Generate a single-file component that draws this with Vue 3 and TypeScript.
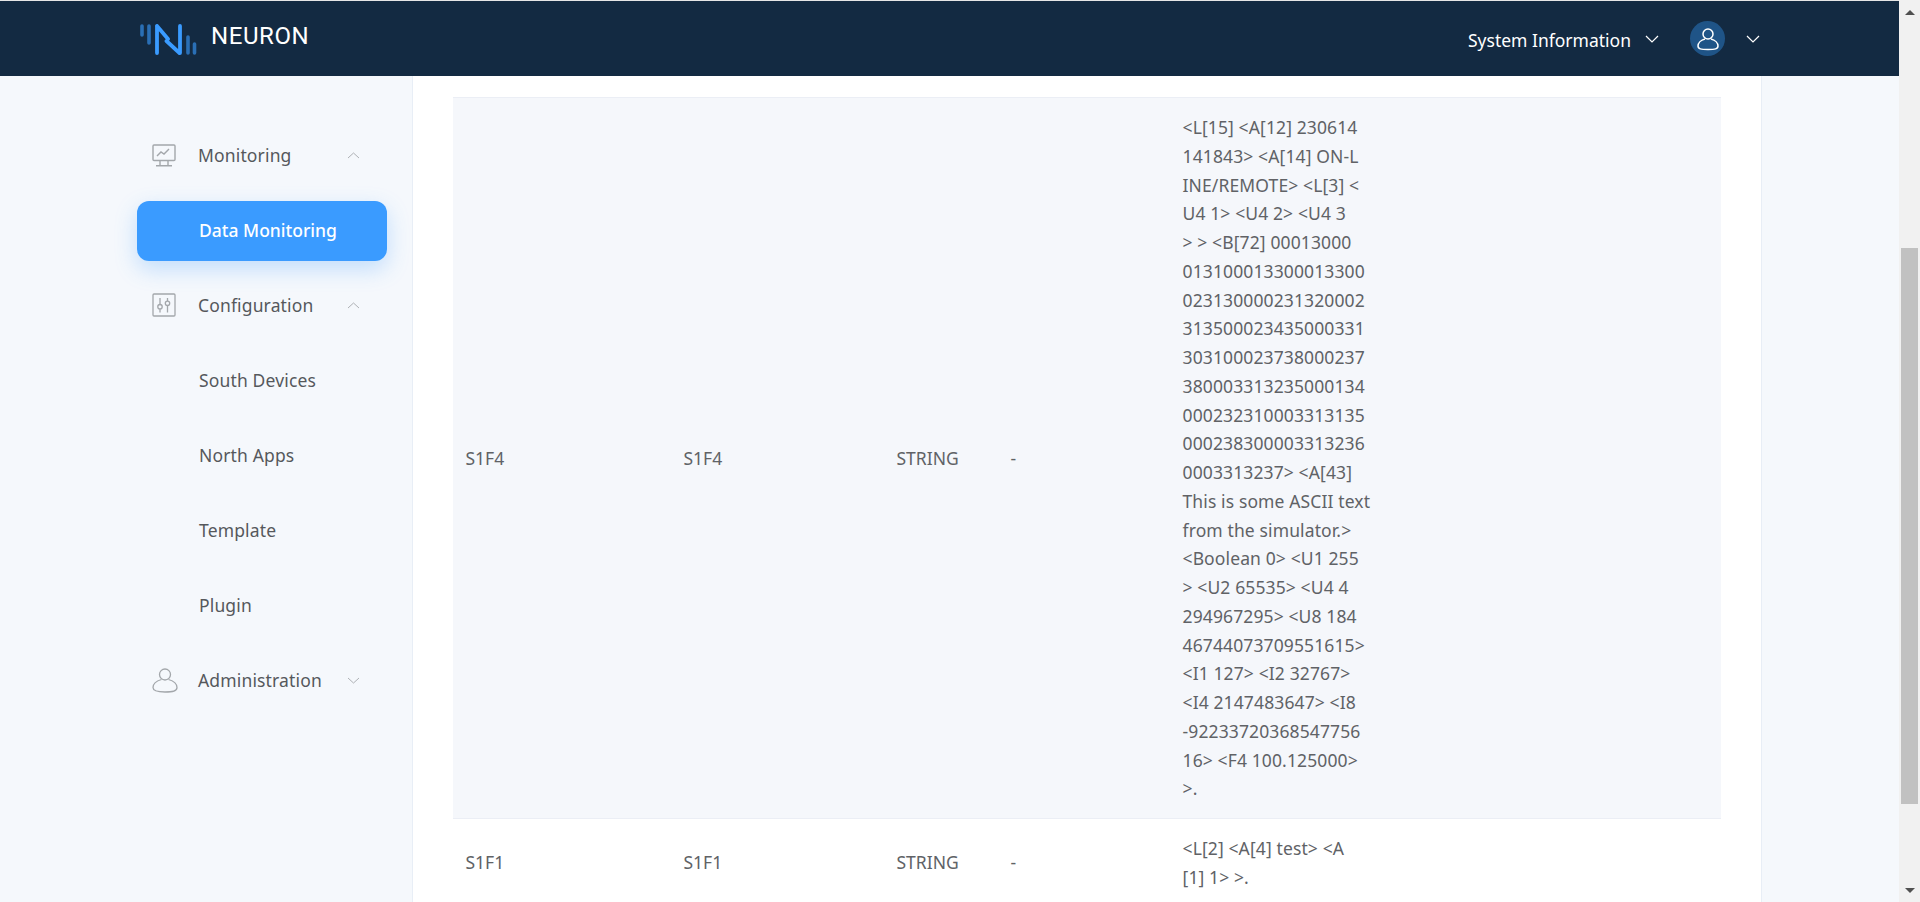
<script setup lang="ts">
interface MenuItem {
  label: string
  icon?: 'monitor' | 'sliders' | 'user'
  chevron?: 'up' | 'down'
  active?: boolean
}

interface TagRow {
  name: string
  address: string
  type: string
  desc: string
  value: string[]
}

const menu: MenuItem[] = [
  { label: 'Monitoring', icon: 'monitor', chevron: 'up' },
  { label: 'Data Monitoring', active: true },
  { label: 'Configuration', icon: 'sliders', chevron: 'up' },
  { label: 'South Devices' },
  { label: 'North Apps' },
  { label: 'Template' },
  { label: 'Plugin' },
  { label: 'Administration', icon: 'user', chevron: 'down' },
]

const rows: TagRow[] = [
  {
    name: 'S1F4',
    address: 'S1F4',
    type: 'STRING',
    desc: '-',
    value: [
      '<L[15] <A[12] 230614',
      '141843> <A[14] ON-L',
      'INE/REMOTE> <L[3] <',
      'U4 1> <U4 2> <U4 3',
      '> > <B[72] 00013000',
      '013100013300013300',
      '023130000231320002',
      '313500023435000331',
      '303100023738000237',
      '380003313235000134',
      '000232310003313135',
      '000238300003313236',
      '0003313237> <A[43]',
      'This is some ASCII text',
      'from the simulator.>',
      '<Boolean 0> <U1 255',
      '> <U2 65535> <U4 4',
      '294967295> <U8 184',
      '46744073709551615>',
      '<I1 127> <I2 32767>',
      '<I4 2147483647> <I8',
      '-92233720368547756',
      '16> <F4 100.125000>',
      '>.',
    ],
  },
  {
    name: 'S1F1',
    address: 'S1F1',
    type: 'STRING',
    desc: '-',
    value: ['<L[2] <A[4] test> <A', '[1] 1> >.'],
  },
]
</script>

<template>
  <div class="screen">
    <div class="page">
      <header class="topbar">
        <div class="brand">
          <svg class="logo" width="60" height="32" viewBox="0 0 60 32" fill="none" stroke-linecap="round">
            <path d="M5 3v9M12 3v17" stroke="#2a6fb5" stroke-width="3.600" />
            <path d="M51 14v16M57.500 21v9" stroke="#2a6fb5" stroke-width="3.600" />
            <path d="M20 3v27M20 3l11 13M29.500 18l13 12M43 3v27" stroke="#3a9bff" stroke-width="3.800" />
          </svg>
          <span class="brand-name">NEURON</span>
        </div>
        <div class="topbar-right">
          <span class="sys-info">System Information</span>
          <svg class="top-chev" width="14" height="8" viewBox="0 0 14 8" fill="none">
            <path d="M1 1l6 6 6-6" stroke="#fff" stroke-width="1.200" />
          </svg>
          <span class="avatar">
            <svg width="22" height="24" viewBox="0 0 22 24" fill="none" stroke="#fff" stroke-width="1.500">
              <circle cx="11" cy="7" r="5" />
              <path d="M8 12C4 13 1 16 1 19c0 3 3 3.500 10 3.500S21 22 21 19c0-3-3-6-7-7" />
            </svg>
          </span>
          <svg class="user-chev" width="14" height="8" viewBox="0 0 14 8" fill="none">
            <path d="M1 1l6 6 6-6" stroke="#fff" stroke-width="1.200" />
          </svg>
        </div>
      </header>

      <div class="body">
        <aside class="sidebar">
          <nav class="menu">
            <a v-for="item in menu" :key="item.label" class="menu-item" :class="{ active: item.active, parent: item.icon }">
              <span v-if="item.icon" class="menu-icon">
                <svg v-if="item.icon === 'monitor'" width="24" height="23" viewBox="0 0 24 23" fill="none" stroke="#a3a7ab" stroke-width="1.400">
                  <rect x="1" y="1" width="22" height="15.500" rx="1" />
                  <path d="M5 12l4-4 3 2 5-5M8 16.500v4.500M16 16.500v4.500M4 21.700h16" />
                </svg>
                <svg v-else-if="item.icon === 'sliders'" width="24" height="24" viewBox="0 0 24 24" fill="none" stroke="#a3a7ab" stroke-width="1.300">
                  <rect x="1" y="1" width="22" height="22" rx="1" />
                  <path d="M8 5v6.500M8 16v3.500M15.500 5v3M15.500 12.500V19.500" />
                  <circle cx="8" cy="13.700" r="2.200" />
                  <circle cx="15.500" cy="10.300" r="2.200" />
                </svg>
                <svg v-else width="26" height="25" viewBox="0 0 26 25" fill="none" stroke="#a3a7ab" stroke-width="1.300">
                  <circle cx="13" cy="6.500" r="5.500" />
                  <path d="M9.500 11.500C4.500 13 1 16 1 19.500 1 23 5 24 13 24s12-1 12-4.500c0-3.500-3.500-6.500-8.500-8" />
                </svg>
              </span>
              <span class="menu-label">{{ item.label }}</span>
              <svg v-if="item.chevron" class="menu-chev" width="13" height="7" viewBox="0 0 13 7" fill="none">
                <path :d="item.chevron === 'up' ? 'M1 6l5.500-5L12 6' : 'M1 1l5.500 5L12 1'" stroke="#aeb1b5" stroke-width="1" />
              </svg>
            </a>
          </nav>
        </aside>

        <main class="content">
          <table class="tag-table">
            <colgroup>
              <col class="col-name" />
              <col class="col-address" />
              <col class="col-type" />
              <col class="col-desc" />
              <col />
            </colgroup>
            <tbody>
              <tr v-for="(row, index) in rows" :key="row.name" :class="{ striped: index === 0 }">
                <td>{{ row.name }}</td>
                <td>{{ row.address }}</td>
                <td>{{ row.type }}</td>
                <td>{{ row.desc }}</td>
                <td>
                  <div v-for="line in row.value" :key="line" class="value-line">{{ line }}</div>
                </td>
              </tr>
            </tbody>
          </table>
        </main>

        <div class="gutter"></div>
      </div>
    </div>

    <div class="scrollbar">
      <span class="arrow arrow-up"></span>
      <div class="track"><div class="thumb"></div></div>
      <span class="arrow arrow-down"></span>
    </div>
  </div>
</template>

<style scoped>
.screen {
  display: flex;
  height: 902px;
  overflow: hidden;
  font-family: 'Noto Sans', 'Noto Sans CJK SC', sans-serif;
  font-size: 17.5px;
  color: #606266;
}

.page {
  display: flex;
  flex: 1;
  flex-direction: column;
  min-width: 0;
  border-top: 1px solid #e6e6e6;
}

.topbar {
  display: flex;
  flex: 0 0 75px;
  align-items: center;
  justify-content: space-between;
  padding: 0 139px 0 137px;
  background: #132a42;
  color: #fff;
}

.brand {
  display: flex;
  align-items: center;
}

.logo {
  margin-top: 1px;
}

.brand-name {
  margin-top: -6px;
  margin-left: 14px;
  font-family: Roboto, sans-serif;
  font-size: 24px;
  letter-spacing: 0.6px;
}

.topbar-right {
  display: flex;
  align-items: center;
}

.sys-info {
  margin-top: 2px;
}

.top-chev {
  margin-left: 14px;
}

.avatar {
  display: flex;
  width: 35px;
  height: 35px;
  margin-left: 31px;
  border-radius: 50%;
  align-items: center;
  justify-content: center;
  background: #1f5487;
}

.user-chev {
  margin-left: 21px;
}

.body {
  display: flex;
  flex: 1;
  min-height: 0;
  background: #f5f8fc;
}

.sidebar {
  box-sizing: border-box;
  flex: 0 0 413px;
  padding: 49px 25px 0 137px;
  border-right: 1px solid #e8eef6;
}

.menu {
  display: flex;
  flex-direction: column;
  gap: 15px;
}

.menu-item {
  display: flex;
  box-sizing: border-box;
  height: 60px;
  align-items: center;
  padding-left: 62px;
  border-radius: 12px;
  color: #55585c;
  letter-spacing: 0.15px;
}

.menu-item.parent {
  padding-left: 15px;
}

.menu-item.active {
  margin: 1px 0 -1px;
  padding-bottom: 2px;
  background: #3a9bff;
  box-shadow: 0 8px 22px rgba(58, 155, 255, 0.28);
  color: #fff;
  font-weight: 500;
  letter-spacing: 0;
}

.menu-icon {
  display: flex;
  flex: 0 0 46px;
  align-items: center;
}

.menu-chev {
  margin-left: auto;
  margin-right: 27px;
}

.content {
  box-sizing: border-box;
  flex: 0 0 1349px;
  padding: 21px 40px 0;
  border-right: 1px solid #e8eef6;
  background: #fff;
}

.tag-table {
  width: 100%;
  border-collapse: collapse;
  table-layout: fixed;
}

.col-name {
  width: 218px;
}

.col-address {
  width: 213px;
}

.col-type {
  width: 114px;
}

.col-desc {
  width: 172px;
}

.tag-table td {
  padding: 15px 12.5px;
  border-top: 1px solid #ebeef5;
  line-height: 28.75px;
  vertical-align: middle;
}

.striped td {
  background: #f5f7fb;
}

.value-line {
  letter-spacing: 0.12px;
  white-space: nowrap;
}

.gutter {
  flex: 1;
}

.scrollbar {
  display: flex;
  flex: 0 0 21px;
  flex-direction: column;
  align-items: center;
  background: #f1f1f1;
}

.arrow {
  flex: 0 0 auto;
  width: 0;
  height: 0;
  border-right: 5px solid transparent;
  border-left: 5px solid transparent;
}

.arrow-up {
  margin-top: 10px;
  border-bottom: 5px solid #505050;
}

.arrow-down {
  margin-bottom: 9px;
  border-top: 5px solid #505050;
}

.track {
  flex: 1;
  width: 100%;
  padding-top: 233px;
}

.thumb {
  width: 17px;
  height: 556px;
  margin: 0 auto;
  background: #c1c1c1;
}
</style>

<style>
html,
body {
  margin: 0;
  overflow: hidden;
}
</style>
